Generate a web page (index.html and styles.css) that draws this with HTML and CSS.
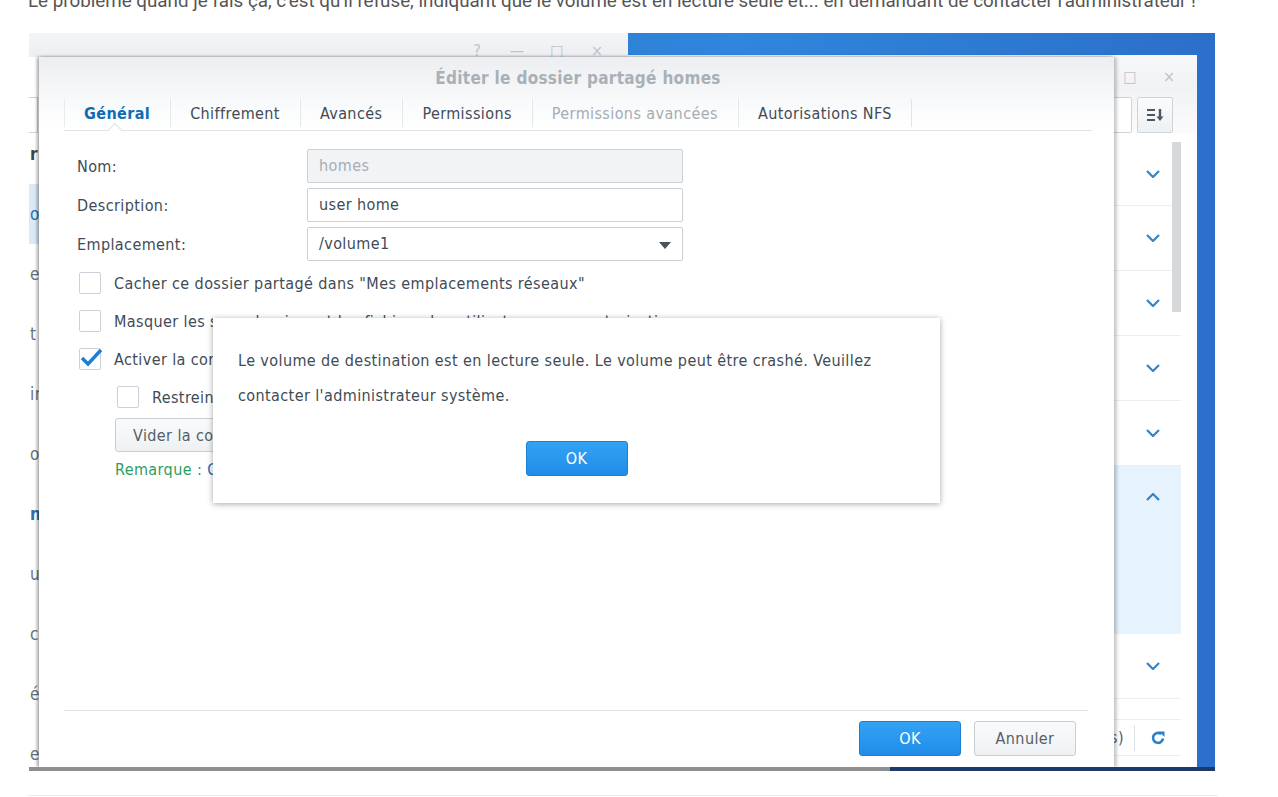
FILE: index.html
```html
<!DOCTYPE html>
<html lang="fr">
<head>
  <meta charset="UTF-8" />
  <title>Dossier partagé en lecture seule</title>
  <link rel="stylesheet" href="styles.css">
</head>
<body>
  <div class="post">
    <p class="post-text">Le problème quand je fais ça, c'est qu'il refuse, indiquant que le volume est en lecture seule et... en demandant de contacter l'administrateur !</p>

    <!-- capture d'écran DSM -->
    <div class="shot">

      <!-- fenêtre de gauche (derrière) -->
      <div class="win win-left">
        <div class="win-bar">
          <span class="ctl">?</span><span class="ctl">&#8212;</span><span class="ctl">&#9633;</span><span class="ctl">&#215;</span>
        </div>
        <div class="left-tool"><div class="edge-box"></div></div>
        <ul class="left-list">
          <li class="strong">r</li>
          <li class="sel">o</li>
          <li>e</li>
          <li>t</li>
          <li>ir</li>
          <li>o</li>
          <li class="strong blue">n</li>
          <li>u</li>
          <li>c</li>
          <li>é</li>
          <li>e</li>
        </ul>
      </div>

      <!-- fenêtre de droite (derrière) -->
      <div class="win win-right">
        <div class="win-bar right-bar">
          <span class="ctl">&#9633;</span><span class="ctl">&#215;</span>
        </div>
        <div class="right-tool">
          <div class="search-box"></div>
          <div class="sort-btn">
            <svg width="18" height="16" viewBox="0 0 18 16">
              <path d="M1 3h8M1 8h8M1 13h8" stroke="#4a5866" stroke-width="2" fill="none"/>
              <path d="M14 2v9" stroke="#4a5866" stroke-width="2.4"/>
              <path d="M10.5 9.5l3.5 4.5 3.5-4.5z" fill="#4a5866"/>
            </svg>
          </div>
        </div>
        <div class="right-list">
          <div class="scrollbar"></div>
          <div class="row first"><svg class="chev" width="14" height="8" viewBox="0 0 14 8"><path d="M1 1l6 6 6-6" /></svg></div>
          <div class="row"><svg class="chev" width="14" height="8" viewBox="0 0 14 8"><path d="M1 1l6 6 6-6" /></svg></div>
          <div class="row"><svg class="chev" width="14" height="8" viewBox="0 0 14 8"><path d="M1 1l6 6 6-6" /></svg></div>
          <div class="row"><svg class="chev" width="14" height="8" viewBox="0 0 14 8"><path d="M1 1l6 6 6-6" /></svg></div>
          <div class="row"><svg class="chev" width="14" height="8" viewBox="0 0 14 8"><path d="M1 1l6 6 6-6" /></svg></div>
          <div class="row open"><svg class="chev" width="14" height="8" viewBox="0 0 14 8"><path d="M1 7l6-6 6 6" /></svg></div>
          <div class="row"><svg class="chev" width="14" height="8" viewBox="0 0 14 8"><path d="M1 1l6 6 6-6" /></svg></div>
        </div>
        <div class="right-foot">
          <span class="count">s)</span>
          <span class="refresh">
            <svg width="16" height="16" viewBox="0 0 16 16">
              <path d="M13 8.5A5 5 0 1 1 11.2 4" stroke="#2a7fc9" stroke-width="2.6" fill="none"/>
              <path d="M9 1.5h5.5V7z" fill="#2a7fc9"/>
            </svg>
          </span>
        </div>
      </div>

      <!-- fenêtre principale -->
      <div class="dlg">
        <div class="dlg-head">
          <div class="dlg-title">Éditer le dossier partagé homes</div>
          <div class="tabs">
            <span class="tab active">Général</span>
            <span class="tab">Chiffrement</span>
            <span class="tab">Avancés</span>
            <span class="tab">Permissions</span>
            <span class="tab disabled">Permissions avancées</span>
            <span class="tab">Autorisations NFS</span>
          </div>
        </div>

        <div class="dlg-body">
          <div class="form-grid">
            <label>Nom:</label>
            <div class="field disabled">homes</div>
            <label>Description:</label>
            <div class="field">user home</div>
            <label>Emplacement:</label>
            <div class="field select">/volume1<span class="caret"></span></div>
          </div>

          <div class="checks">
            <div class="check"><span class="box"></span>Cacher ce dossier partagé dans "Mes emplacements réseaux"</div>
            <div class="check"><span class="box"></span>Masquer les sous-dossiers et les fichiers des utilisateurs sans autorisation</div>
            <div class="check"><span class="box checked">
              <svg width="24" height="20" viewBox="0 0 24 20"><path d="M3 10l6 6L22 2" stroke="#1b7fd6" stroke-width="3.4" fill="none"/></svg>
            </span>Activer la corbeille</div>
            <div class="check sub"><span class="box"></span>Restreindre l'accès aux administrateurs</div>
          </div>
          <button class="btn btn-plain sub-btn">Vider la corbeille</button>
          <div class="note"><span class="note-label">Remarque :</span> <span class="note-link">Ces réglages</span></div>
        </div>

        <div class="dlg-foot">
          <button class="btn btn-blue">OK</button>
          <button class="btn btn-plain">Annuler</button>
        </div>
      </div>

      <!-- message d'erreur -->
      <div class="alert">
        <p class="alert-text">Le volume de destination est en lecture seule. Le volume peut être crashé. Veuillez contacter l'administrateur système.</p>
        <div class="alert-actions"><button class="btn btn-blue">OK</button></div>
      </div>

      <div class="shot-edge"></div>
    </div>

    <div class="post-rule"></div>
  </div>
</body>
</html>
```

FILE: styles.css
```css
body {
  margin: 0;
  background: #fff;
  font-family: Roboto, "Liberation Sans", sans-serif;
  overflow: hidden;
}

.post {
  padding-left: 28px;
}

.post-text {
  margin: -9px 0 0;
  font-size: 18.8px;
  line-height: 20px;
  color: #555;
  white-space: nowrap;
}

.post-rule {
  margin-top: 24px;
  width: 1190px;
  border-top: 1px solid #ececec;
}

/* Capture */
.shot {
  position: relative;
  margin: 22px 0 0 1px;
  width: 1186px;
  height: 738px;
  overflow: hidden;
  background: linear-gradient(90deg, #2a73c8, #2f86dc 60%, #2c6fcb);
  font-family: "DejaVu Sans Condensed", "DejaVu Sans", sans-serif;
  font-stretch: condensed;
  letter-spacing: 0.4px;
  color: #414b55;
}

.win {
  position: absolute;
  background: #fff;
  display: flex;
  flex-direction: column;
}

.win-bar {
  display: flex;
  justify-content: flex-end;
  gap: 24px;
  height: 24px;
  padding: 10px 23px 0 0;
  box-sizing: border-box;
  background: linear-gradient(#f4f5f7, #eceef1);
}

.ctl {
  width: 16px;
  height: 16px;
  line-height: 16px;
  text-align: center;
  font-size: 16px;
  letter-spacing: 0;
  color: #bfc4c9;
}

.win-left {
  left: 0;
  top: 0;
  width: 599px;
  height: 734px;
}

.left-tool {
  height: 40px;
  padding-top: 40px;
}

.edge-box {
  width: 8px;
  height: 34px;
  border: 1px solid #cfd4d9;
  border-left: none;
}

.left-list {
  list-style: none;
  margin: 0;
  padding: 0;
}

.left-list li {
  height: 60px;
  line-height: 60px;
  padding-left: 1px;
  font-size: 17px;
  color: #6a737c;
}

.left-list li:first-child {
  margin-top: -9px;
}

.left-list li.sel {
  background: #dce9f6;
  color: #2d6fb3;
}

.left-list li.strong {
  font-weight: bold;
  color: #3d4650;
}

.left-list li.blue {
  color: #2d6fb3;
}

.win-right {
  left: 599px;
  top: 22px;
  width: 569px;
  height: 712px;
}

.right-bar {
  height: 32px;
  padding: 14px 20px 0 0;
  gap: 23px;
  background: linear-gradient(#f7f8fa, #f0f2f4);
}

.right-tool {
  display: flex;
  justify-content: flex-end;
  gap: 5px;
  padding: 10px 24px 0 0;
  height: 46px;
  box-sizing: border-box;
  background: linear-gradient(#f0f2f4, #fbfbfc);
}

.search-box {
  width: 100px;
  height: 34px;
  border: 1px solid #cfd4d9;
  border-radius: 2px;
  background: #fff;
}

.sort-btn {
  width: 34px;
  height: 34px;
  border: 1px solid #cfd4d9;
  border-radius: 2px;
  background: linear-gradient(#fafbfc, #eef1f3);
  display: flex;
  align-items: center;
  justify-content: center;
}

.right-list {
  position: relative;
  margin-top: 9px;
  padding-right: 16px;
}

.scrollbar {
  position: absolute;
  right: 16px;
  top: 0;
  width: 9px;
  height: 170px;
  background: #d6d8da;
}

.row {
  height: 64px;
  border-bottom: 1px solid #eceff1;
  display: flex;
  align-items: center;
  justify-content: flex-end;
  padding-right: 21px;
}

.row.first {
  height: 63px;
}

.row.open {
  height: 167px;
  align-items: flex-start;
  background: #e6f2fc;
  border-bottom-color: #e6f2fc;
}

.row.open .chev {
  margin-top: 27px;
}

.chev {
  fill: none;
  stroke: #3583c4;
  stroke-width: 2.2;
}

.right-foot {
  margin: 20px 16px 0 0;
  height: 35px;
  border-top: 1px solid #eceff1;
  border-bottom: 1px solid #eceff1;
  display: flex;
  align-items: center;
  justify-content: flex-end;
}

.count {
  font-size: 16px;
  color: #555e68;
  padding-right: 10px;
  border-right: 1px solid #dde1e5;
  line-height: 26px;
}

.refresh {
  width: 46px;
  display: flex;
  justify-content: center;
}

/* Fenêtre principale */
.dlg {
  position: absolute;
  left: 10px;
  top: 24px;
  width: 1075px;
  height: 710px;
  background: #fff;
  box-shadow: -2px 0 3px rgba(0, 0, 0, 0.35), 3px 0 3px rgba(0, 0, 0, 0.2);
  display: flex;
  flex-direction: column;
}

.dlg-head {
  background: linear-gradient(#eceef1, #fafbfc 70%, #fff);
  padding: 0 22px 0 25px;
}

.dlg-title {
  height: 42px;
  line-height: 43px;
  text-align: center;
  font-weight: bold;
  font-size: 17px;
  letter-spacing: 0.3px;
  color: #a8b0b8;
}

.tabs {
  display: flex;
  height: 32px;
  border-bottom: 1px solid #dfe3e7;
  box-sizing: border-box;
}

.tab {
  position: relative;
  padding: 0 19px;
  font-size: 16px;
  border-left: 1px solid #e3e6e9;
  border-right: 1px solid #fff;
  margin-bottom: 3px;
  line-height: 29px;
  white-space: nowrap;
}

.tab:first-child {
  border-left-color: #e8ebee;
}

.tab:last-child {
  border-right-color: #e3e6e9;
}

.tab.active {
  color: #0d6cb5;
  font-weight: bold;
}

.tab.active::after {
  content: "";
  position: absolute;
  left: 45px;
  bottom: -8px;
  width: 9px;
  height: 9px;
  background: #fff;
  border-left: 1px solid #dfe3e7;
  border-top: 1px solid #dfe3e7;
  transform: rotate(45deg);
}

.tab.disabled {
  color: #a4acb4;
}

.dlg-body {
  flex: 1;
  padding: 18px 0 0 38px;
  font-size: 16px;
}

.form-grid {
  display: grid;
  grid-template-columns: 230px 376px;
  grid-auto-rows: 34px;
  row-gap: 5px;
  align-items: center;
}

.field {
  height: 34px;
  box-sizing: border-box;
  border: 1px solid #cbd1d7;
  border-radius: 2px;
  padding-left: 11px;
  line-height: 32px;
  position: relative;
}

.field.disabled {
  background: #f1f3f5;
  color: #a5adb5;
}

.caret {
  position: absolute;
  right: 11px;
  top: 14px;
  border-left: 6px solid transparent;
  border-right: 6px solid transparent;
  border-top: 7px solid #4a525a;
}

.checks {
  margin-top: 11px;
  display: flex;
  flex-direction: column;
  gap: 16px;
}

.check {
  display: flex;
  align-items: center;
  height: 22px;
  padding-left: 2px;
  white-space: nowrap;
}

.check.sub {
  padding-left: 40px;
}

.box {
  width: 22px;
  height: 22px;
  box-sizing: border-box;
  border: 1px solid #cbd1d7;
  border-radius: 2px;
  background: #fff;
  margin-right: 13px;
  position: relative;
  flex: none;
}

.box svg {
  position: absolute;
  left: -1px;
  top: -1px;
}

.btn {
  font-family: inherit;
  font-stretch: condensed;
  letter-spacing: 0.4px;
  font-size: 16px;
  height: 35px;
  width: 102px;
  border-radius: 3px;
  cursor: pointer;
}

.btn-blue {
  background: linear-gradient(#33a2f4, #1f8de8);
  border: 1px solid #1d7fd2;
  color: #fff;
}

.btn-plain {
  background: linear-gradient(#f9fafb, #eef1f3);
  border: 1px solid #c9ced3;
  color: #555e67;
}

.sub-btn {
  display: block;
  margin: 10px 0 0 38px;
  width: auto;
  padding: 0 17px;
  height: 34px;
}

.note {
  margin: 8px 0 0 38px;
  line-height: 20px;
}

.note-label {
  color: #2e9d61;
}

.note-link {
  color: #1a6db5;
}

.dlg-foot {
  margin: 0 26px 0 25px;
  border-top: 1px solid #e1e4e7;
  padding: 10px 12px 11px 0;
  display: flex;
  justify-content: flex-end;
  gap: 13px;
}

/* Message */
.alert {
  position: absolute;
  left: 184px;
  top: 285px;
  width: 727px;
  height: 185px;
  box-sizing: border-box;
  background: #fff;
  box-shadow: 0 1px 6px rgba(0, 0, 0, 0.35);
  padding: 25px 25px 0;
  font-size: 16px;
}

.alert-text {
  margin: 0;
  line-height: 35px;
  width: 660px;
}

.alert-actions {
  margin-top: 28px;
  display: flex;
  justify-content: center;
}

.alert-actions .btn {
  height: 35px;
}

.shot-edge {
  position: absolute;
  left: 0;
  right: 0;
  bottom: 0;
  height: 4px;
  background: linear-gradient(90deg, #8d8f92 0, #8d8f92 861px, #1d3b6a 861px);
}
```
